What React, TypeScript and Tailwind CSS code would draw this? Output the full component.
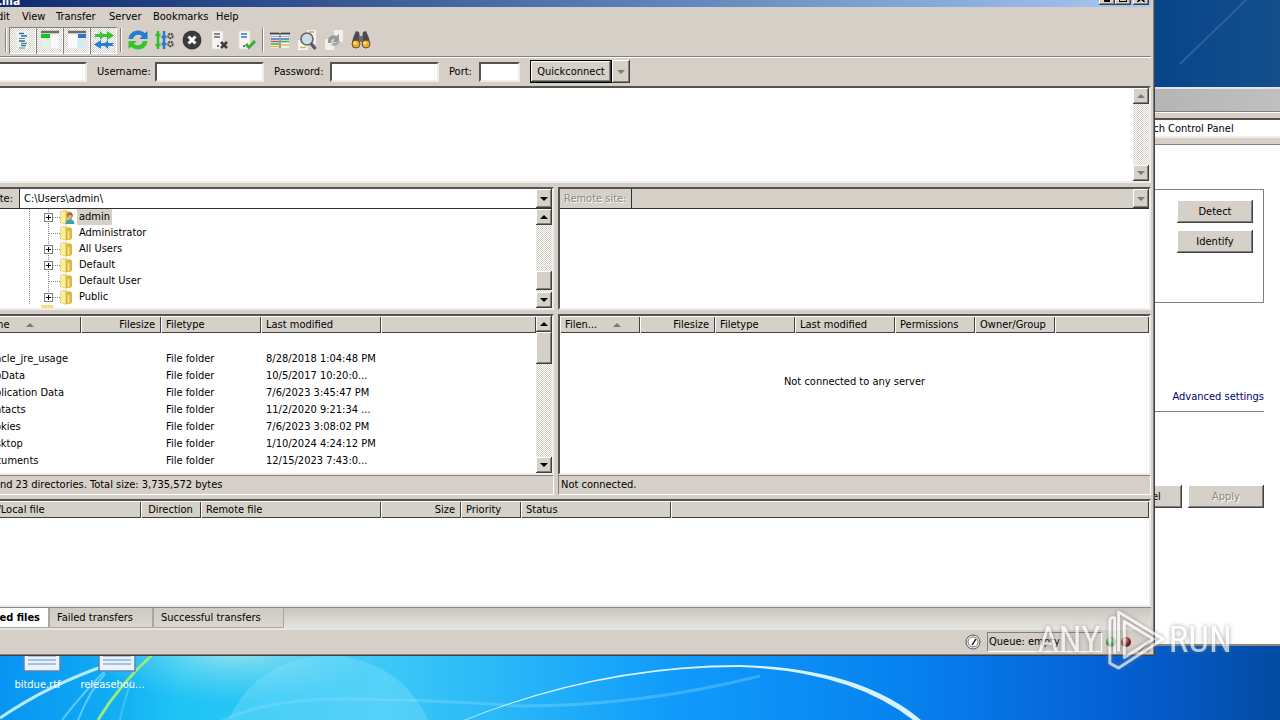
import React from "react";

const raised =
  "bg-[#d5d0c8] shadow-[inset_-1px_-1px_0_#404040,inset_1px_1px_0_#fff,inset_-2px_-2px_0_#808080]";
const sunken = "border-2 border-t-[#55534f] border-l-[#55534f] border-r-[#efedea] border-b-[#efedea]";
const checker = "bg-[repeating-conic-gradient(#d5d0c8_0%_25%,#fff_0%_50%)] bg-[length:2px_2px]";
const headCell =
  "h-[17px] p-0 font-normal bg-[#d5d0c8] shadow-[inset_1px_1px_0_#fff,inset_-1px_-1px_0_#404040] whitespace-nowrap";

type Column = { label: string; width?: string; align?: string; sorted?: boolean };

const localColumns: Column[] = [
  { label: "Filename", width: "w-[121px]", sorted: true },
  { label: "Filesize", width: "w-[80px]", align: "text-right" },
  { label: "Filetype", width: "w-[100px]" },
  { label: "Last modified", width: "w-[120px]" },
  { label: "" },
];

const remoteColumns: Column[] = [
  { label: "Filen...", width: "w-[80px]", sorted: true },
  { label: "Filesize", width: "w-[75px]", align: "text-right" },
  { label: "Filetype", width: "w-[80px]" },
  { label: "Last modified", width: "w-[100px]" },
  { label: "Permissions", width: "w-[80px]" },
  { label: "Owner/Group", width: "w-[80px]" },
  { label: "" },
];

const queueColumns: Column[] = [
  { label: "Server/Local file", width: "w-[181px]" },
  { label: "Direction", width: "w-[60px]", align: "text-center" },
  { label: "Remote file", width: "w-[180px]" },
  { label: "Size", width: "w-[80px]", align: "text-right" },
  { label: "Priority", width: "w-[60px]" },
  { label: "Status", width: "w-[150px]" },
  { label: "" },
];

const files = [
  { name: ".oracle_jre_usage", modified: "8/28/2018 1:04:48 PM" },
  { name: "AppData", modified: "10/5/2017 10:20:0..." },
  { name: "Application Data", modified: "7/6/2023 3:45:47 PM" },
  { name: "Contacts", modified: "11/2/2020 9:21:34 ..." },
  { name: "Cookies", modified: "7/6/2023 3:08:02 PM" },
  { name: "Desktop", modified: "1/10/2024 4:24:12 PM" },
  { name: "Documents", modified: "12/15/2023 7:43:0..." },
  { name: "Downloads", modified: "1/10/2024 4:24:12 PM" },
];

const tree = [
  { name: "admin", expandable: true, selected: true },
  { name: "Administrator" },
  { name: "All Users", expandable: true },
  { name: "Default", expandable: true },
  { name: "Default User" },
  { name: "Public", expandable: true, last: true },
];

const Arrow = ({ up = false, muted = false }: { up?: boolean; muted?: boolean }) => (
  <svg width="8" height="4" viewBox="0 0 8 4" className="shrink-0">
    <path d={up ? "M0 4L4 0L8 4Z" : "M0 0L4 4L8 0Z"} fill={muted ? "#7d7a75" : "#000"} />
  </svg>
);

const ArrowButton = ({ label, up, muted, size = "h-4" }: { label: string; up?: boolean; muted?: boolean; size?: string }) => (
  <button aria-label={label} className={`${raised} ${size} w-4 shrink-0 flex items-center justify-center`}>
    <Arrow up={up} muted={muted} />
  </button>
);

const ScrollBar = ({ thumb, muted }: { thumb?: string; muted?: boolean }) => (
  <div className={`${checker} w-4 shrink-0 flex flex-col`}>
    <ArrowButton label="Scroll up" up muted={muted} />
    <div className="flex-1 flex flex-col">{thumb && <div className={`${raised} ${thumb}`} />}</div>
    <ArrowButton label="Scroll down" muted={muted} />
  </div>
);

const Head = ({ columns }: { columns: Column[] }) => (
  <thead>
    <tr>
      {columns.map((c, i) => (
        <th key={i} scope="col" className={`${headCell} ${c.width ?? ""} ${c.align ?? "text-left"}`}>
          <span className="inline-flex items-center gap-4 pl-[5px] pr-[6px] align-top leading-[17px]">
            {c.label}
            {c.sorted && <Arrow up muted />}
          </span>
        </th>
      ))}
    </tr>
  </thead>
);

const TreeMark = ({ expandable, last, user }: { expandable?: boolean; last?: boolean; user?: boolean }) => (
  <svg width="48" height="16" viewBox="0 0 48 16" className="shrink-0">
    <path d="M0.5 0V16" stroke="#8a8a8a" strokeDasharray="1 1" />
    <path d={last ? "M19.5 0V8" : "M19.5 0V16"} stroke="#8a8a8a" strokeDasharray="1 1" />
    <path d="M20 8.5H31" stroke="#8a8a8a" strokeDasharray="1 1" />
    {expandable && (
      <>
        <rect x="15.5" y="4.5" width="8" height="8" fill="#fff" stroke="#808080" />
        <path d="M17 8.5H22M19.5 6V11" stroke="#000" />
      </>
    )}
    <path d="M31 2L37 0.5L38 2H41L43 4V14L36 15.5L31 14Z" fill="#ecd774" />
    <path d="M37 2.5L43 3.5V14L37 15.5Z" fill="#d9b93f" />
    <path d="M32 3L36 2V14L32 13.5Z" fill="#f9efa6" />
    <path d="M39.5 6V14" stroke="#f7eba0" strokeWidth="1.5" />
    {user && (
      <>
        <circle cx="41" cy="6.5" r="2.8" fill="#8a6247" />
        <circle cx="41" cy="7.5" r="1.8" fill="#e6b78d" />
        <path d="M36.5 15C37 11 39 10.500 41 10.500S45 11 45.500 15Z" fill="#3f9fae" />
      </>
    )}
  </svg>
);

const Doc = () => <path d="M3 1H14V19H3Z" fill="#f6f5f3" stroke="#dedbd6" strokeWidth="0.7" />;

const icons = {
  log: (
    <>
      <path d="M4 1H13L16 4V19H4Z" fill="#f0f3f6" />
      <path d="M6 3.500H11M8 6H14M6 11H12M8 15.500H13" stroke="#2c6ea8" strokeWidth="1.400" />
      <path d="M6 8.500H12M8 13.300H14M6 18H12" stroke="#4d9a67" strokeWidth="1.200" />
    </>
  ),
  localTree: (
    <>
      <rect x="1" y="1" width="18" height="18" fill="#edebe7" />
      <path d="M1 2H19" stroke="#706d69" strokeWidth="2.500" />
      <rect x="1" y="4" width="9" height="4" fill="#13c422" />
      <rect x="2" y="9" width="7" height="9" fill="#dff5df" />
      <rect x="11" y="5" width="8" height="13" fill="#fafafa" />
    </>
  ),
  remoteTree: (
    <>
      <rect x="1" y="1" width="18" height="18" fill="#edebe7" />
      <path d="M1 2H19" stroke="#706d69" strokeWidth="2.500" />
      <rect x="11" y="4" width="8" height="4" fill="#2679cf" />
      <rect x="11" y="9" width="7" height="9" fill="#d5e8fa" />
      <rect x="1" y="5" width="9" height="13" fill="#fafafa" />
    </>
  ),
  queue: (
    <>
      <path d="M0 4H6V1L9 4H13V1L20 5.500L13 10V7H9L6 10V7H0L2 5.500Z" fill="#35c72f" />
      <path d="M20 13H14V10L11 13H7V10L0 14.500L7 19V16H11L14 19V16H20L18 14.500Z" fill="#237fd7" />
    </>
  ),
  refresh: (
    <>
      <path d="M0.500 9C1 4 5 0.500 10 0.500C13 0.500 15 1.500 16.700 3.200L19.500 1V9H11.500L14 6.200C11 3.500 6 4.500 5 9Z" fill="#247bd0" />
      <path d="M19.500 11C19 16 15 19.500 10 19.500C7 19.500 5 18.500 3.300 16.800L0.500 19V11H8.500L6 13.800C9 16.500 14 15.500 15 11Z" fill="#35c52b" />
    </>
  ),
  process: (
    <>
      <path d="M3 1V19M0.500 5H5.500M0.500 15H5.500" stroke="#32c12b" strokeWidth="2.500" fill="none" />
      <path d="M9 1V19M6.500 7H11.500M6.500 14H11.500" stroke="#247bd0" strokeWidth="2.500" fill="none" />
      <circle cx="15.500" cy="6" r="2.300" fill="none" stroke="#595959" strokeWidth="2" strokeDasharray="2 0.500" />
      <circle cx="15.500" cy="14" r="2.300" fill="none" stroke="#595959" strokeWidth="2" strokeDasharray="2 0.500" />
    </>
  ),
  cancel: (
    <>
      <circle cx="10" cy="10" r="9.500" fill="#3b3b3b" />
      <path d="M6.500 6.500L13.500 13.500M13.500 6.500L6.500 13.500" stroke="#fff" strokeWidth="3" />
    </>
  ),
  disconnect: (
    <>
      <Doc />
      <path d="M5 4H11M5 7H11" stroke="#69665f" strokeWidth="1.300" />
      <circle cx="9" cy="16" r="1" fill="#444" />
      <path d="M12 12L18 18M18 12L12 18" stroke="#3b3b3b" strokeWidth="2.500" />
    </>
  ),
  reconnect: (
    <>
      <Doc />
      <path d="M5 4H11M5 7H11" stroke="#247bd0" strokeWidth="1.700" />
      <circle cx="8" cy="16" r="1" fill="#444" />
      <path d="M10 14L13 17.500L19 11" stroke="#38ad36" strokeWidth="2.800" fill="none" />
    </>
  ),
  filter: (
    <>
      <rect x="1" y="2" width="18" height="16" fill="#f4f2ee" />
      <path d="M0 3.500H9.500M10.500 3.500H20" stroke="#45474e" strokeWidth="2" />
      <path d="M1 6.500H9M11 6.500H19" stroke="#aaa" />
      <path d="M1 9H9M11 9H19" stroke="#2678cf" strokeWidth="1.500" />
      <path d="M1 11.500H9" stroke="#c14c42" strokeWidth="1.500" />
      <path d="M11 11.500H19M1 14H9" stroke="#3cae42" strokeWidth="1.500" />
      <path d="M1 16.500H9M11 15H19" stroke="#dcc64b" strokeWidth="1.500" />
      <path d="M10 3V18" stroke="#45474e" />
    </>
  ),
  compare: (
    <>
      <path d="M10 0H19V14H10Z" fill="#f6f5f3" />
      <path d="M12 2H17" stroke="#dc9255" strokeWidth="1.500" />
      <path d="M1 10H11V20H1Z" fill="#f6f5f3" />
      <path d="M3 17.500H9" stroke="#cdb444" strokeWidth="1.500" />
      <circle cx="10" cy="9" r="6" fill="#c9dce8" stroke="#686868" strokeWidth="1.700" />
      <path d="M14 13.500L18.500 19" stroke="#555" strokeWidth="3" />
    </>
  ),
  sync: (
    <>
      <path d="M10 0H19V12H10Z" fill="#f1efec" />
      <path d="M1 9H10V20H1Z" fill="#f1efec" />
      <path d="M4 13C3 7 8 3.500 12.500 6L15 4V12H8L10.500 9.500C8.500 8.500 7 10 7.500 13Z" fill="#999" />
      <path d="M16 11C15 15 11 17 7 15L9 12.500C11 13.500 13 12.500 13 11Z" fill="#aaa" />
    </>
  ),
  find: (
    <>
      <path d="M5 1L8 2L9 8L7 15L1 13L2 8Z" fill="#4b4b50" />
      <path d="M15 1L12 2L11 8L13 15L19 13L18 8Z" fill="#4b4b50" />
      <rect x="8" y="6" width="4" height="6" fill="#6f6d6b" />
      <circle cx="5" cy="14" r="4" fill="#f1ad25" stroke="#604e31" />
      <circle cx="15" cy="14" r="4" fill="#f1ad25" stroke="#604e31" />
      <circle cx="4" cy="13" r="1.500" fill="#ffe591" />
      <circle cx="14" cy="13" r="1.500" fill="#ffe591" />
    </>
  ),
};

type IconName = keyof typeof icons;

const ToolButton = ({ name, label, on }: { name: IconName; label: string; on?: boolean }) => (
  <button
    aria-label={label}
    className={`w-[27px] h-[27px] flex items-center justify-center ${
      on ? `${checker} shadow-[inset_1px_1px_0_#808080,inset_-1px_-1px_0_#fff]` : ""
    }`}
  >
    <svg width="20" height="20" viewBox="0 0 20 20">
      {icons[name]}
    </svg>
  </button>
);

const Separator = () => (
  <div className="w-[7px] h-6 flex justify-center">
    <div className="w-[2px] bg-[#808080] border-r border-white" />
  </div>
);

const Field = ({ label, id, labelWidth, width }: { label: string; id: string; labelWidth: string; width: string }) => (
  <div className="flex items-center">
    <label htmlFor={id} className={labelWidth}>
      {label}
    </label>
    <input id={id} className={`${sunken} ${width} h-5 bg-white px-1 outline-none`} />
  </div>
);

const Toolbar = () => (
  <div className="h-[30px] pl-11 pb-[2px] flex items-center shrink-0">
    <Separator />
    <ToolButton name="log" label="Message log" on />
    <ToolButton name="localTree" label="Local tree" on />
    <ToolButton name="remoteTree" label="Remote tree" on />
    <ToolButton name="queue" label="Transfer queue" on />
    <Separator />
    <ToolButton name="refresh" label="Refresh" />
    <ToolButton name="process" label="Process queue" />
    <ToolButton name="cancel" label="Cancel" />
    <ToolButton name="disconnect" label="Disconnect" />
    <ToolButton name="reconnect" label="Reconnect" />
    <Separator />
    <ToolButton name="filter" label="Filters" />
    <ToolButton name="compare" label="Compare" />
    <ToolButton name="sync" label="Synchronized browsing" />
    <ToolButton name="find" label="Search" />
  </div>
);

const QuickConnect = () => (
  <div className="h-[30px] shrink-0 border-t border-[#808080] shadow-[inset_0_1px_0_#fff] flex items-center gap-[10px]">
    <Field label="Host:" id="host" labelWidth="w-10 pl-2" width="w-[89px]" />
    <Field label="Username:" id="user" labelWidth="w-[58px]" width="w-[109px]" />
    <Field label="Password:" id="pass" labelWidth="w-[56px]" width="w-[109px]" />
    <Field label="Port:" id="port" labelWidth="w-[30px]" width="w-[41px]" />
    <div className="flex">
      <button className={`${raised} w-[82px] h-[23px] border border-black`}>Quickconnect</button>
      <button aria-label="History" className={`${raised} w-[18px] h-[23px] flex items-center justify-center`}>
        <Arrow muted />
      </button>
    </div>
  </div>
);

const LocalTree = () => (
  <div className={`${sunken} h-[123px] flex flex-col bg-white`}>
    <div className="h-5 shrink-0 flex border-b border-[#303030]">
      <label htmlFor="local" className="w-[60px] bg-[#d5d0c8] border-r border-[#303030] text-right pr-[6px] leading-[19px]">
        Local site:
      </label>
      <input id="local" defaultValue="C:\Users\admin\" className="flex-1 min-w-0 px-1 outline-none" />
      <ArrowButton label="Open local sites" size="h-[19px]" />
    </div>
    <div className="flex-1 min-h-0 flex">
      <ul className="flex-1 overflow-hidden pl-[69px]">
        {tree.map((t) => (
          <li key={t.name} className="h-4 flex items-center">
            <TreeMark expandable={t.expandable} last={t.last} user={t.selected} />
            <span className={`px-[2px] leading-4 ${t.selected ? "bg-[#d5d0c8]" : ""}`}>{t.name}</span>
          </li>
        ))}
        <li className="pl-3">
          <div className="w-3 h-3 bg-[#f0df86]" />
        </li>
      </ul>
      <ScrollBar thumb="mt-[46px] h-[19px]" />
    </div>
  </div>
);

const RemoteTree = () => (
  <div className={`${sunken} h-[123px] flex flex-col bg-white`}>
    <div className="h-5 shrink-0 flex border-b border-[#303030] bg-[#d5d0c8]">
      <div className="w-[72px] border-r border-[#303030] pl-1 leading-[19px] text-[#8a8782] [text-shadow:1px_1px_0_#fff]">
        Remote site:
      </div>
      <div className="flex-1" />
      <ArrowButton label="Open remote sites" muted size="h-[19px]" />
    </div>
  </div>
);

const Status = ({ children }: { children: React.ReactNode }) => (
  <div className="h-5 shrink-0 border border-t-[#808080] border-l-[#808080] border-r-white border-b-white px-[2px] leading-[18px] whitespace-nowrap">
    {children}
  </div>
);

const LocalFiles = () => (
  <div className="flex-1 min-h-0 flex flex-col">
    <div className={`${sunken} flex-1 min-h-0 flex bg-white`}>
      <div className="flex-1 overflow-hidden">
        <table className="w-full table-fixed border-collapse">
          <Head columns={localColumns} />
          <tbody>
            <tr className="h-[17px]">
              <td className="p-0 pl-[23px] leading-4">..</td>
            </tr>
            {files.map((f) => (
              <tr key={f.name} className="h-[17px] leading-4 whitespace-nowrap">
                <td className="p-0 pl-[22px]">{f.name}</td>
                <td />
                <td className="p-0 pl-[5px]">File folder</td>
                <td className="p-0 pl-[5px]">{f.modified}</td>
              </tr>
            ))}
          </tbody>
        </table>
      </div>
      <ScrollBar thumb="h-8" />
    </div>
    <Status>8 files and 23 directories. Total size: 3,735,572 bytes</Status>
  </div>
);

const RemoteFiles = () => (
  <div className="flex-1 min-h-0 flex flex-col">
    <div className={`${sunken} flex-1 min-h-0 bg-white`}>
      <table className="w-full table-fixed border-collapse">
        <Head columns={remoteColumns} />
      </table>
      <p className="text-center mt-[42px]">Not connected to any server</p>
    </div>
    <Status>Not connected.</Status>
  </div>
);

const tab = "h-5 border border-t-0 border-[#aaa7a0] text-left px-[7px] bg-gradient-to-b from-[#cfcbc3] to-[#d9d6d0]";

const Queue = () => (
  <div className="shrink-0">
    <div className={`${sunken} h-[108px] bg-white overflow-hidden`}>
      <table className="w-full table-fixed border-collapse">
        <Head columns={queueColumns} />
      </table>
    </div>
    <div className="h-[23px] flex border-t border-[#8c8982] bg-gradient-to-b from-[#c9c6bf] to-[#e9e7e3]">
      <button className="w-[91px] h-5 bg-white border-r border-b border-[#aaa7a0] text-right pr-2 font-bold">
        Queued files
      </button>
      <button className={`${tab} w-[104px]`}>Failed transfers</button>
      <button className={`${tab} w-[131px]`}>Successful transfers</button>
    </div>
  </div>
);

const StatusBar = () => (
  <div className="h-6 shrink-0 flex items-center justify-end">
    <svg width="16" height="16" viewBox="0 0 16 16" className="mr-[6px]">
      <circle cx="8" cy="8" r="7" fill="#eee" stroke="#555" />
      <circle cx="8" cy="8" r="5" fill="#fff" stroke="#777" />
      <path d="M7 11L11 5" stroke="#333" strokeWidth="1.500" />
    </svg>
    <div className="w-[115px] h-5 border border-t-[#808080] border-l-[#808080] border-r-white border-b-white px-px leading-[18px]">
      Queue: empty
    </div>
    <svg width="49" height="22" viewBox="0 0 49 22">
      <defs>
        <radialGradient id="led-on" cx="0.4" cy="0.3">
          <stop offset="0" stopColor="#b9e8b9" />
          <stop offset="1" stopColor="#207a2b" />
        </radialGradient>
        <radialGradient id="led-off" cx="0.4" cy="0.3">
          <stop offset="0" stopColor="#d9a0a0" />
          <stop offset="1" stopColor="#701717" />
        </radialGradient>
      </defs>
      <circle cx="9" cy="11" r="5" fill="url(#led-on)" />
      <circle cx="24" cy="11" r="5" fill="url(#led-off)" />
      <path d="M37 21L48 10M41 21L48 14M45 21L48 18" stroke="#808080" strokeWidth="1.500" />
    </svg>
  </div>
);

const FileZilla = () => (
  <main className="absolute -left-11 right-[125px] top-0 bottom-16 bg-[#d5cfc7] border-r border-b border-[#404040] shadow-[inset_-1px_-1px_0_#808080] pl-[2px] pr-[3px] pb-px flex flex-col">
    <header className="h-[7px] shrink-0 bg-gradient-to-r from-[#0a246a] to-[#a6caf0] flex items-end justify-between overflow-hidden">
      <h1 className="pl-[14px] text-white font-bold text-xs leading-3">FileZilla</h1>
      <div className="flex pb-[2px] pr-[2px]">
        <button aria-label="Minimize" className={`${raised} w-4 h-[14px] flex items-end justify-center pb-[3px]`}>
          <span className="w-[6px] h-[2px] bg-black" />
        </button>
        <button aria-label="Restore" className={`${raised} w-4 h-[14px] flex items-end justify-center pb-[3px]`}>
          <span className="w-2 h-2 border border-t-2 border-black" />
        </button>
        <button aria-label="Close" className={`${raised} ml-[2px] w-4 h-[14px] flex items-end justify-center pb-[3px]`}>
          <svg width="8" height="7" viewBox="0 0 8 7">
            <path d="M0.500 0L7.500 7M7.500 0L0.500 7" stroke="#000" strokeWidth="1.800" />
          </svg>
        </button>
      </div>
    </header>
    <nav className="h-[19px] shrink-0 pt-[1px] flex items-center">
      <button className="w-[64px] pr-3 text-right">Edit</button>
      <button className="w-[34px] text-left">View</button>
      <button className="w-[53px] text-left">Transfer</button>
      <button className="w-[44px] text-left">Server</button>
      <button className="w-[63px] text-left">Bookmarks</button>
      <button className="text-left">Help</button>
    </nav>
    <Toolbar />
    <QuickConnect />
    <div className={`${sunken} h-[97px] shrink-0 bg-white flex justify-end`}>
      <ScrollBar muted />
    </div>
    <div className="mt-1 flex-1 min-h-0 flex gap-1">
      <section className="w-[596px] shrink-0 flex flex-col gap-1">
        <LocalTree />
        <LocalFiles />
      </section>
      <section className="flex-1 min-w-0 flex flex-col gap-1">
        <RemoteTree />
        <RemoteFiles />
      </section>
    </div>
    <div className="h-1 shrink-0" />
    <Queue />
    <StatusBar />
  </main>
);

const ControlPanel = () => (
  <aside className="absolute -right-1 w-72 top-[87px] bottom-[74px] bg-white border-b-2 border-[#8a8782] flex flex-col">
    <div className="h-6 shrink-0 border-t-2 border-[#e8e5e0] bg-gradient-to-r from-[#a8a8a8] to-[#c0c0c0]" />
    <div className="h-[34px] shrink-0 bg-[#d5cfc7] border-t border-b border-[#808080] shadow-[inset_0_1px_0_#fff] pt-[6px]">
      <input
        aria-label="Search"
        defaultValue="Search Control Panel"
        className={`${sunken} w-full h-5 bg-white pl-[133px] outline-none`}
      />
    </div>
    <div className="flex-1 flex flex-col pr-5">
      <div className="mt-11 h-[114px] border border-[#808080] pt-[10px] pr-[10px] flex flex-col items-end gap-[7px]">
        <button className={`${raised} w-[76px] h-[23px]`}>Detect</button>
        <button className={`${raised} w-[76px] h-[23px]`}>Identify</button>
      </div>
      <div className="mt-[87px] h-[22px] border-b border-[#808080] text-right">
        <a href="#advanced" className="text-[#00006b]">
          Advanced settings
        </a>
      </div>
      <div className="mt-[73px] flex justify-end gap-[6px]">
        <button className={`${raised} w-[76px] h-[23px]`}>Cancel</button>
        <button className={`${raised} w-[76px] h-[23px] text-[#8a8782] [text-shadow:1px_1px_0_#fff]`}>Apply</button>
      </div>
    </div>
  </aside>
);

const Wallpaper = () => (
  <svg className="absolute inset-0 w-full h-full" viewBox="0 0 1280 720" preserveAspectRatio="none">
    <defs>
      <linearGradient id="sky">
        <stop offset="0" stopColor="#0794f3" />
        <stop offset="0.08" stopColor="#10aaf3" />
        <stop offset="0.14" stopColor="#1fc4f5" />
        <stop offset="0.3" stopColor="#3cc8f7" />
        <stop offset="0.4" stopColor="#28b6f8" />
        <stop offset="0.52" stopColor="#119cfb" />
        <stop offset="0.7" stopColor="#0783f0" />
        <stop offset="0.87" stopColor="#0560d5" />
        <stop offset="1" stopColor="#034ba3" />
      </linearGradient>
      <linearGradient id="corner">
        <stop offset="0" stopColor="#023f8a" />
        <stop offset="1" stopColor="#144f8c" />
      </linearGradient>
      <radialGradient id="glow">
        <stop offset="0" stopColor="#c0f0e8" stopOpacity="0.75" />
        <stop offset="1" stopColor="#7adcf5" stopOpacity="0" />
      </radialGradient>
    </defs>
    <rect width="1280" height="720" fill="url(#sky)" />
    <rect x="1100" width="180" height="100" fill="url(#corner)" />
    <path d="M1180 64L1246 0" stroke="#3d73a8" strokeWidth="2" opacity="0.6" />
    <ellipse cx="235" cy="648" rx="150" ry="55" fill="url(#glow)" />
    <path d="M228 720Q258 657 330 655Q400 660 428 720Z" fill="#a5ecff" opacity="0.25" />
    <g fill="none">
      <path d="M0 718Q50 684 110 664" stroke="#b5eaff" strokeWidth="3" />
      <path d="M62 720Q85 690 112 664M78 720Q90 690 105 674" stroke="#7fd8ff" opacity="0.7" strokeWidth="2" />
      <path d="M98 720Q120 684 152 655" stroke="#9bea7c" strokeWidth="3" />
      <path d="M120 720Q124 700 132 680" stroke="#7fdcff" opacity="0.4" strokeWidth="2" />
      <path d="M220 722Q265 699 340 699T520 706Q640 706 760 676" stroke="#8adcff" opacity="0.35" strokeWidth="3" />
    </g>
    <path d="M464 720Q600 665 740 665Q860 668 921 720H913Q850 671 740 667Q600 667 466 720Z" fill="#d8f3ff" />
  </svg>
);

const DesktopFile = ({ name }: { name: string }) => (
  <div className="w-[75px] flex flex-col items-center gap-1">
    <svg width="38" height="40" viewBox="0 0 38 40" className="ml-2">
      <path d="M1 1H37V39H1Z" fill="#e8f3ff" stroke="#5d83bb" strokeWidth="1.500" />
      <path d="M5 24H33M5 28H33M5 32H33" stroke="#6b8fc4" strokeWidth="1.200" />
    </svg>
    <span className="text-white leading-[18px]">{name}</span>
  </div>
);

const Watermark = () => (
  <div className="absolute right-12 bottom-12 h-16 flex items-center gap-1 text-white opacity-70 font-['Roboto_Condensed','Liberation_Sans_Narrow',sans-serif] text-[37px] [filter:drop-shadow(0_0_2px_#777)] pointer-events-none">
    <span>ANY</span>
    <svg width="60" height="64" viewBox="0 0 62 64" fill="none" stroke="currentColor" strokeWidth="3" strokeLinejoin="round">
      <path d="M14 44V3L60 31L14 61L5 56V13Q5 8 10 9V46" />
      <path d="M20 45V13L50 31L20 50Z" />
    </svg>
    <span>RUN</span>
  </div>
);

const App = () => (
  <div className="relative h-screen overflow-hidden text-black text-[11px] leading-[14px] font-['DejaVu_Sans_Condensed','Liberation_Sans',sans-serif]">
    <Wallpaper />
    <div className="absolute left-0 bottom-[26px] flex">
      <DesktopFile name="bitdue.rtf" />
      <DesktopFile name="releasehou..." />
    </div>
    <ControlPanel />
    <FileZilla />
    <Watermark />
  </div>
);

export default App;
